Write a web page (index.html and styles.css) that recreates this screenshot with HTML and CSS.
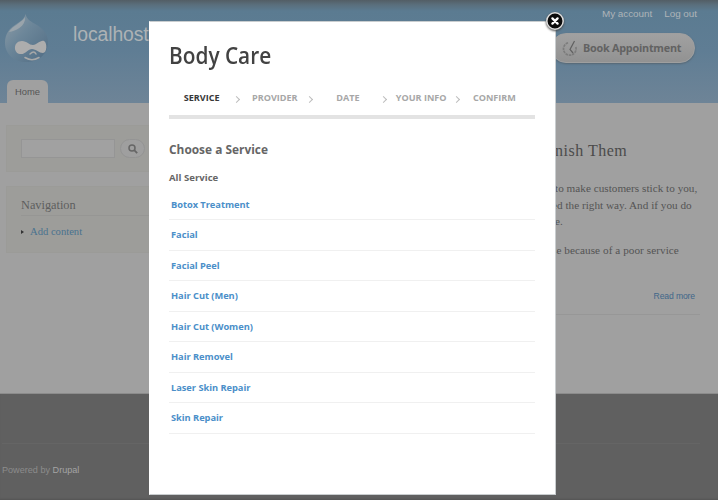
FILE: index.html
```html
<!DOCTYPE html>
<html lang="en">
<head>
<meta charset="utf-8">
<title>Body Care</title>
<link rel="stylesheet" href="styles.css">
</head>
<body>
<div class="page">
  <header class="header">
    <svg class="logo" viewBox="0 0 46 52" width="46" height="52">
      <defs><linearGradient id="drop" x1="0" y1="0" x2="1" y2="1"><stop offset="0" stop-color="#8f9da7"/><stop offset=".42" stop-color="#6c8699"/><stop offset="1" stop-color="#506c84"/></linearGradient></defs>
      <path d="M22.500 2C21.500 7 18 9 12 13C6 17 2 22 2 31C2 42 11 50 23 50C36 50 45 42 45 30C45 22 40 17 34 13C28 9.500 24 8 22.500 2Z" fill="url(#drop)"/>
      <path d="M22 5C20 10 9 14 6 20C13 19 23 14 22 5Z" fill="#a3aaaf" opacity=".8"/>
      <path d="M19 29C24 29 26 33 30 33C34 33 37 28 41 29C44.500 31 44 41 40 41C36 41 33 37 29 37C25 37 22 43 17 42C10 41 10 29 19 29Z" fill="#adadad"/>
      <path d="M27 42Q31 38 33 42M22 45.500Q29 50 36 45.500" fill="none" stroke="#a8a8a8" stroke-width="1.500" stroke-linecap="round"/>
    </svg>
    <div class="site-name">localhost</div>
    <nav class="user-links"><a>My account</a><a>Log out</a></nav>
    <div class="book">
      <svg viewBox="0 0 16 17" width="16" height="17"><g fill="none" stroke="#7c7c7c"><path d="M6 2.800A6.300 6.300 0 1 0 13.800 7" stroke-width="1.700" stroke-dasharray="2.500 .8"/><path d="M12.500 1L8 9.500L11 13" stroke="#606060" stroke-width="1.200"/></g></svg>
      <span>Book Appointment</span>
    </div>
    <div class="tab">Home</div>
  </header>
  <main class="main">
    <aside class="sidebar">
      <div class="block search">
        <div class="field"></div>
        <div class="go"><svg viewBox="0 0 10 10" width="10" height="10"><circle cx="4" cy="4" r="3" fill="none" stroke="#666" stroke-width="1.500"/><path d="M6.200 6.200L9.200 9.200" stroke="#666" stroke-width="1.800"/></svg></div>
      </div>
      <div class="block nav">
        <h2>Navigation</h2>
        <div class="nav-item"><i class="caret"></i><a>Add content</a></div>
      </div>
    </aside>
    <article class="article">
      <h2>nish Them</h2>
      <p><span class="l1">to make customers stick to you,</span><span class="l2">ed the right way. And if you do</span><span class="l3">e.</span></p>
      <p><span class="l4">se because of a poor service</span></p>
      <a class="more">Read more</a>
    </article>
  </main>
  <footer class="footer"><div class="powered">Powered by <b>Drupal</b></div></footer>
</div>
<section class="modal">
  <h1>Body Care</h1>
  <ol class="steps">
    <li class="active">SERVICE</li><li>PROVIDER</li><li>DATE</li><li>YOUR INFO</li><li>CONFIRM</li>
  </ol>
  <h3>Choose a Service</h3>
  <h4>All Service</h4>
  <ul class="services">
    <li><a>Botox Treatment</a></li>
    <li><a>Facial</a></li>
    <li><a>Facial Peel</a></li>
    <li><a>Hair Cut (Men)</a></li>
    <li><a>Hair Cut (Women)</a></li>
    <li><a>Hair Removel</a></li>
    <li><a>Laser Skin Repair</a></li>
    <li><a>Skin Repair</a></li>
  </ul>
  <svg class="close" viewBox="0 0 20 20" width="20" height="20"><circle cx="10" cy="10" r="8.200" fill="#0b0b0b" stroke="#ddd" stroke-width="1.500"/><path d="M7.400 7.400L12.600 12.600M12.600 7.400L7.400 12.600" stroke="#fff" stroke-width="2.300" stroke-linecap="round"/></svg>
</section>
</body>
</html>
```
FILE: styles.css
```css
* { box-sizing: border-box; }
body, h1, h2, h3, h4, p, ol, ul { margin: 0; padding: 0; }
ol, ul { list-style: none; }
body { width: 718px; height: 500px; overflow: hidden; font-family: "Open Sans", sans-serif; }
.page { height: 500px; display: flex; flex-direction: column; background: #a0a0a0; }
.header { height: 103px; flex: none; display: grid; grid-template-columns: 73px 1fr 166px; grid-template-rows: 28px 52px 23px; background: linear-gradient(#535e65 0, #5a6f7d 5px, #5b7b91 11px, #5f7d94 50px, #6e8497 103px); font-family: "Liberation Sans", sans-serif; }
.logo { grid-area: 1 / 1 / 3 / 2; margin: 12px 0 0 3px; }
.site-name { grid-area: 1 / 2 / 3 / 3; margin-top: 22px; font-size: 19.4px; line-height: 24px; color: #adb2b5; letter-spacing: -.1px; }
.user-links { grid-area: 1 / 3; display: flex; gap: 12px; padding-top: 7px; margin-left: 50px; font-size: 9.9px; letter-spacing: -.03px; line-height: 13px; color: #aeb4b8; white-space: nowrap; }
.book { grid-area: 2 / 3; display: flex; align-items: center; gap: 5px; width: 144px; height: 30px; margin: 5px 0 0 -1px; padding-left: 10px; border-radius: 15px; background: linear-gradient(#a1a1a1, #929292); border: 1px solid #9f9f9f; box-shadow: 0 1px 2px #566672; font: 700 10.8px "Open Sans", sans-serif; letter-spacing: -.22px; color: #626262; white-space: nowrap; }
.book span { margin-top: -1px; }
.tab { grid-area: 3 / 1; width: 41px; height: 23px; margin-left: 7px; border-radius: 6px 6px 0 0; background: #a0a0a0; color: #555; font-size: 9.4px; line-height: 24px; text-align: center; }
.main { height: 291px; flex: none; display: flex; justify-content: space-between; border-bottom: 1px solid #8c8c8c; }
.sidebar { width: 150px; padding: 22px 0 0 6px; font-family: "Liberation Serif", serif; }
.block { background: #9d9d9a; border: 1px solid #9b9b98; }
.search { display: flex; gap: 5px; height: 47px; padding: 13px 0 0 14px; }
.field { width: 94px; height: 19px; background: #a1a1a1; border: 1px solid #959595; }
.go { width: 25px; height: 19px; display: flex; align-items: center; justify-content: center; border: 1px solid #949494; border-radius: 10px; background: #9f9f9f; }
.nav { height: 67px; margin-top: 14px; padding: 8px 0 0 14px; }
.nav h2 { height: 21px; font-size: 12.3px; line-height: 20px; font-weight: 400; color: #5e5e5e; border-bottom: 1px solid #969694; }
.nav-item { display: flex; align-items: center; gap: 6px; margin-top: 8px; font-size: 10.6px; line-height: 16px; color: #49728f; }
.caret { border-left: 3px solid #333; border-top: 2.5px solid transparent; border-bottom: 2.5px solid transparent; }
.article { width: 163px; padding-top: 38px; color: #545454; font-family: "Liberation Serif", serif; white-space: nowrap; }
.article h2 { font-size: 16px; line-height: 20px; letter-spacing: .5px; font-weight: 400; color: #4b4b4b; margin-bottom: 19px; }
.article p { margin-bottom: 12px; font-size: 11.2px; line-height: 16.5px; }
.article span { display: block; letter-spacing: .02px; }
.article span.l2, .article span.l4 { margin-left: -3px; }
.article span.l4 { letter-spacing: .06px; }
.more { display: block; height: 26px; margin: 31px 18px 0 0; padding-right: 5px; text-align: right; font: 8.6px/14px "Liberation Sans", sans-serif; letter-spacing: -.12px; color: #40678a; border-bottom: 1px solid #979797; }
.footer { flex: 1; padding-top: 49px; background: #606060; box-shadow: inset 0 -2px 2px -1px #555; font: 9.1px/14px "Liberation Sans", sans-serif; color: #8c8c8c; }
.powered { margin: 0 18px 0 2px; padding-top: 19px; border-top: 1px solid #656565; }
.powered b { font-weight: 400; color: #a4a4a4; }
.modal { position: absolute; left: 149px; top: 21px; width: 407px; height: 474px; padding: 17px 20px 0 19px; background: #fff; border: 1px solid #c9cdcf; border-left-color: #fff; }
.modal h1 { font-size: 23px; line-height: 32px; transform: scaleX(.905); transform-origin: left; font-weight: 600; color: #424242; }
.steps { height: 48px; padding-top: 20px; display: grid; grid-template-columns: repeat(5, 73.2px); border-bottom: 4px solid #e3e3e3; }
.steps li { position: relative; text-align: center; font-size: 9.1px; line-height: 14px; letter-spacing: -.02px; font-weight: 700; color: #a7a7a7; padding-right: 8px; white-space: nowrap; }
.steps .active { color: #383838; }
.steps li:not(:last-child)::after { content: ""; position: absolute; right: 3px; top: 6px; width: 4px; height: 4px; border: solid #bcbcbc; border-width: 1px 1px 0 0; transform: rotate(45deg); }
.modal h3 { margin-top: 21px; font-size: 11.9px; line-height: 18px; font-weight: 700; color: #666; }
.modal h4 { margin-top: 13px; font-size: 9.6px; line-height: 14px; font-weight: 700; color: #666; }
.services { margin-top: 4.9px; }
.services li { height: 30.5px; padding: 8px 0 0 2px; font-size: 9.3px; line-height: 13px; letter-spacing: -.04px; font-weight: 700; color: #4b8fc9; border-bottom: 1px solid #f0f0f0; }
.close { position: absolute; right: -10px; top: -11px; filter: drop-shadow(0 1px 1px #444); }
```
